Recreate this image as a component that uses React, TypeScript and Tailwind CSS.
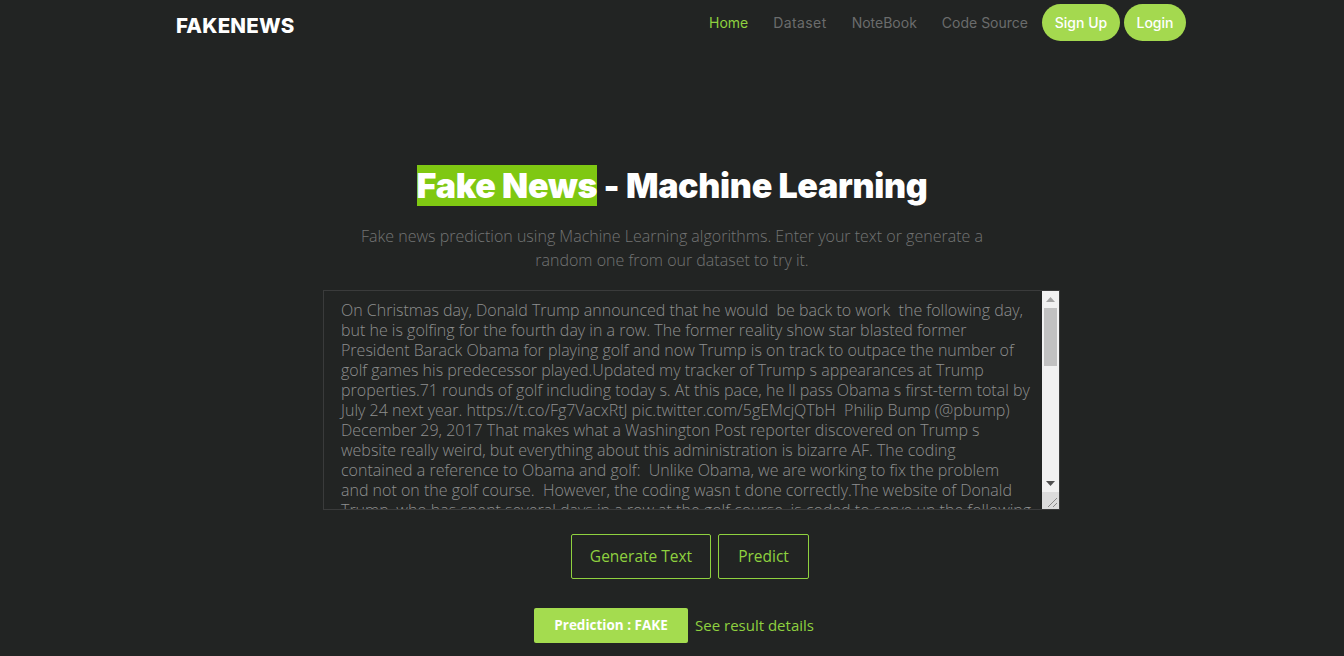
import React from 'react';

const articleLines = [
  'On Christmas day, Donald Trump announced that he would  be back to work  the following day,',
  'but he is golfing for the fourth day in a row. The former reality show star blasted former',
  'President Barack Obama for playing golf and now Trump is on track to outpace the number of',
  'golf games his predecessor played.Updated my tracker of Trump s appearances at Trump',
  'properties.71 rounds of golf including today s. At this pace, he ll pass Obama s first-term total by',
  'July 24 next year. https://t.co/Fg7VacxRtJ pic.twitter.com/5gEMcjQTbH  Philip Bump (@pbump)',
  'December 29, 2017 That makes what a Washington Post reporter discovered on Trump s',
  'website really weird, but everything about this administration is bizarre AF. The coding',
  'contained a reference to Obama and golf:  Unlike Obama, we are working to fix the problem',
  'and not on the golf course.  However, the coding wasn t done correctly.The website of Donald',
  'Trump, who has spent several days in a row at the golf course, is coded to serve up the following',
  'message in the event of an internal server error: https://t.co/zrWpyMXRcz',
  'pic.twitter.com/wiQSQNNzw0  Christopher Ingraham (@_cingraham) December 28, 2017',
  'That snippet of code appears to be on all https://t.co/dkhw0AlHB4 pages, which is the',
  'footer at the bottom of every page of the site. Trump s website has a message in the',
  'event of an internal server error that reads:  Unlike Obama, we are working to fix the',
  'problem   and not on the golf course.   The coding was discovered by a reporter who',
  'tweeted a screenshot of the error message, and it quickly went viral on social media.',
  'Meanwhile, Trump continued to spend his holiday at his Mar-a-Lago resort in Palm',
  'Beach, Florida, where he has been playing golf almost every single day since arriving.',
  'During the 2016 campaign, Trump repeatedly criticized Obama for playing golf, saying',
  'that he would be too busy working for the American people to take time off.',
  'Since taking office, Trump has spent roughly one out of every four days at one of his',
  'properties, and has visited a golf club on more than 80 occasions in his first year.',
  'The White House rarely confirms whether the president is actually golfing, often saying',
  'only that he is  having meetings and making calls.  Photos posted on social media by',
  'club members, however, frequently show him on the course with his golf partners.',
  'Featured image via Getty Images',
];

// Classic scrollbar, drawn by hand (the headless page hides native ones)
const FakeScrollbar: React.FC = () => (
  <div className="flex w-[17px] shrink-0 flex-col bg-[#f1f1f1]">
    <div className="flex h-[17px] items-center justify-center">
      <svg width="9" height="5" viewBox="0 0 9 5"><path d="M4.5 0L9 5H0z" fill="#a3a3a3" /></svg>
    </div>
    <div className="flex-1 px-[2px]">
      <div className="h-[58px] w-full bg-[#c1c1c1]" />
    </div>
    <div className="flex h-[17px] items-center justify-center">
      <svg width="9" height="5" viewBox="0 0 9 5"><path d="M0 0H9L4.5 5z" fill="#505050" /></svg>
    </div>
    <div className="relative h-[17px] bg-[#dcdcdc]">
      <svg className="absolute bottom-[2px] right-[2px]" width="10" height="10" viewBox="0 0 10 10">
        <path d="M10 1L1 10M10 6L6 10" stroke="#8a8a8a" strokeWidth="1" />
      </svg>
    </div>
  </div>
);

const App: React.FC = () => {
  return (
    <div className="min-h-screen w-full bg-[#222423] text-white" style={{ fontFamily: '"Open Sans", sans-serif' }}>
      {/* Navbar */}
      <nav className="mx-auto flex h-[45px] w-[1028px] items-center justify-between pl-[18px]">
        <div className="pt-[8px] text-[20.5px] font-extrabold tracking-[0.2px] text-white" style={{ fontFamily: 'Inter, sans-serif' }}>
          FAKENEWS
        </div>
        <div className="flex items-center text-[14px]" style={{ fontFamily: 'Inter, sans-serif' }}>
          <a className="mr-[25px] text-[#8fd13f]">Home</a>
          <a className="mr-[25px] tracking-[0.4px] text-[#6b6c6c]">Dataset</a>
          <a className="mr-[25px] text-[#6b6c6c]">NoteBook</a>
          <a className="mr-[14px] text-[#6b6c6c]">Code Source</a>
          <button className="mr-[4px] h-[37px] w-[78px] rounded-full bg-[#a4d94f] font-medium text-white">Sign Up</button>
          <button className="h-[37px] w-[62px] rounded-full bg-[#a4d94f] font-medium text-white">Login</button>
        </div>
      </nav>

      {/* Hero */}
      <main className="flex flex-col items-center pt-[118px]">
        <h1 className="text-[34px] font-black leading-[45px] tracking-[-0.3px]" style={{ fontFamily: 'Inter, sans-serif' }}>
          <span className="bg-[#7fc812] text-white">Fake News</span> - Machine Learning
        </h1>
        <p className="mt-[16px] text-center text-[16px] font-light leading-[24px] text-[#737474]">
          Fake news prediction using Machine Learning algorithms. Enter your text or generate a
          <br />
          random one from our dataset to try it.
        </p>

        <div className="ml-[39px] mt-[18px] flex h-[220px] w-[737px] border border-[#3a3b3b]">
          <textarea
            readOnly
            wrap="off"
            defaultValue={articleLines.join('\n')}
            className="h-full flex-1 resize-none overflow-hidden bg-[#222423] pl-[17px] pr-[6px] pt-[9px] text-[16px] font-light leading-[20px] text-[#8e8f8f] outline-none"
          />
          <FakeScrollbar />
        </div>

        <div className="ml-[36px] mt-[24px] flex gap-[7px]">
          <button className="h-[45px] w-[140px] rounded-[2px] border border-[#8fd13f] text-[15.5px] text-[#8fd13f]">Generate Text</button>
          <button className="h-[45px] w-[91px] rounded-[2px] border border-[#8fd13f] text-[15.5px] text-[#8fd13f]">Predict</button>
        </div>

        <div className="ml-[4px] mt-[29px] flex items-center gap-[7px]">
          <div className="flex h-[35px] w-[154px] items-center justify-center rounded-[2px] bg-[#a4dc4f] text-[13.5px] font-bold text-white">
            Prediction : FAKE
          </div>
          <a className="text-[15px] text-[#8fd13f]">See result details</a>
        </div>
      </main>
    </div>
  );
};

export default App;
